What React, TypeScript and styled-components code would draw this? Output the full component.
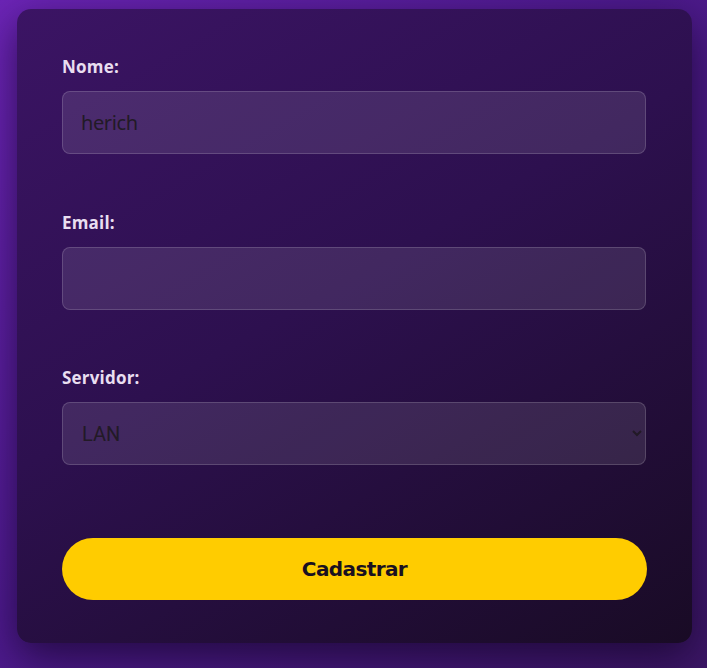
import React from "react";
import styled, { createGlobalStyle } from "styled-components";

const Global = createGlobalStyle`
  html, body { margin: 0; padding: 0; }
  body {
    width: 707px;
    height: 668px;
    overflow: hidden;
    background: linear-gradient(135deg, #6c24b6 0%, #4e1a8e 45%, #3c1666 100%);
    font-family: "Noto Sans", sans-serif;
  }
`;

const Page = styled.div`
  box-sizing: border-box;
  width: 707px;
  height: 668px;
  padding: 9px 15px 0 17px;
`;

const Card = styled.form`
  box-sizing: border-box;
  width: 675px;
  height: 634px;
  border-radius: 14px;
  padding: 48px 45px 0 45px;
  background: linear-gradient(150deg, #3b1464 0%, #2d104f 45%, #190b25 100%);
  box-shadow: 0 14px 40px rgba(10, 0, 25, 0.6);
  display: flex;
  flex-direction: column;
`;

const Group = styled.div`
  display: flex;
  flex-direction: column;
  margin-bottom: 58.5px;
`;

const Label = styled.label`
  font-family: "Open Sans", "Lato", sans-serif;
  font-weight: 700;
  font-size: 17px;
  line-height: 20px;
  letter-spacing: 0.2px;
  color: #e9def0;
  margin-bottom: 14px;
`;

const fieldBase = `
  box-sizing: border-box;
  width: 584px;
  height: 63px;
  border-radius: 8px;
  border: 1.5px solid rgba(255, 255, 255, 0.16);
  background: rgba(255, 255, 255, 0.1);
  color: #221a26;
  font-size: 20px;
  outline: none;
`;

const Input = styled.input`
  ${fieldBase}
  font-family: "Noto Sans", "Open Sans", sans-serif;
  padding: 0 18px;
  letter-spacing: -0.4px;
`;

const Select = styled.select`
  ${fieldBase}
  font-family: "Roboto", sans-serif;
  padding: 0 12px 0 15px;
`;

const LastGroup = styled(Group)`
  margin-bottom: 73px;
`;

const Button = styled.button`
  box-sizing: border-box;
  width: 585px;
  height: 62px;
  border: none;
  border-radius: 31px;
  background: #ffcc00;
  color: #1a1020;
  font-family: "DejaVu Sans", sans-serif;
  font-weight: 700;
  font-size: 20px;
  letter-spacing: -0.6px;
  cursor: pointer;
`;

export default function App() {
  return (
    <>
      <Global />
      <Page>
        <Card onSubmit={(e) => e.preventDefault()}>
          <Group>
            <Label htmlFor="nome">Nome:</Label>
            <Input id="nome" defaultValue="herich" />
          </Group>
          <Group>
            <Label htmlFor="email">Email:</Label>
            <Input id="email" type="email" />
          </Group>
          <LastGroup>
            <Label htmlFor="servidor">Servidor:</Label>
            <Select id="servidor" defaultValue="LAN">
              <option value="LAN">LAN</option>
              <option value="LAS">LAS</option>
              <option value="BR">BR</option>
            </Select>
          </LastGroup>
          <Button type="submit">Cadastrar</Button>
        </Card>
      </Page>
    </>
  );
}
